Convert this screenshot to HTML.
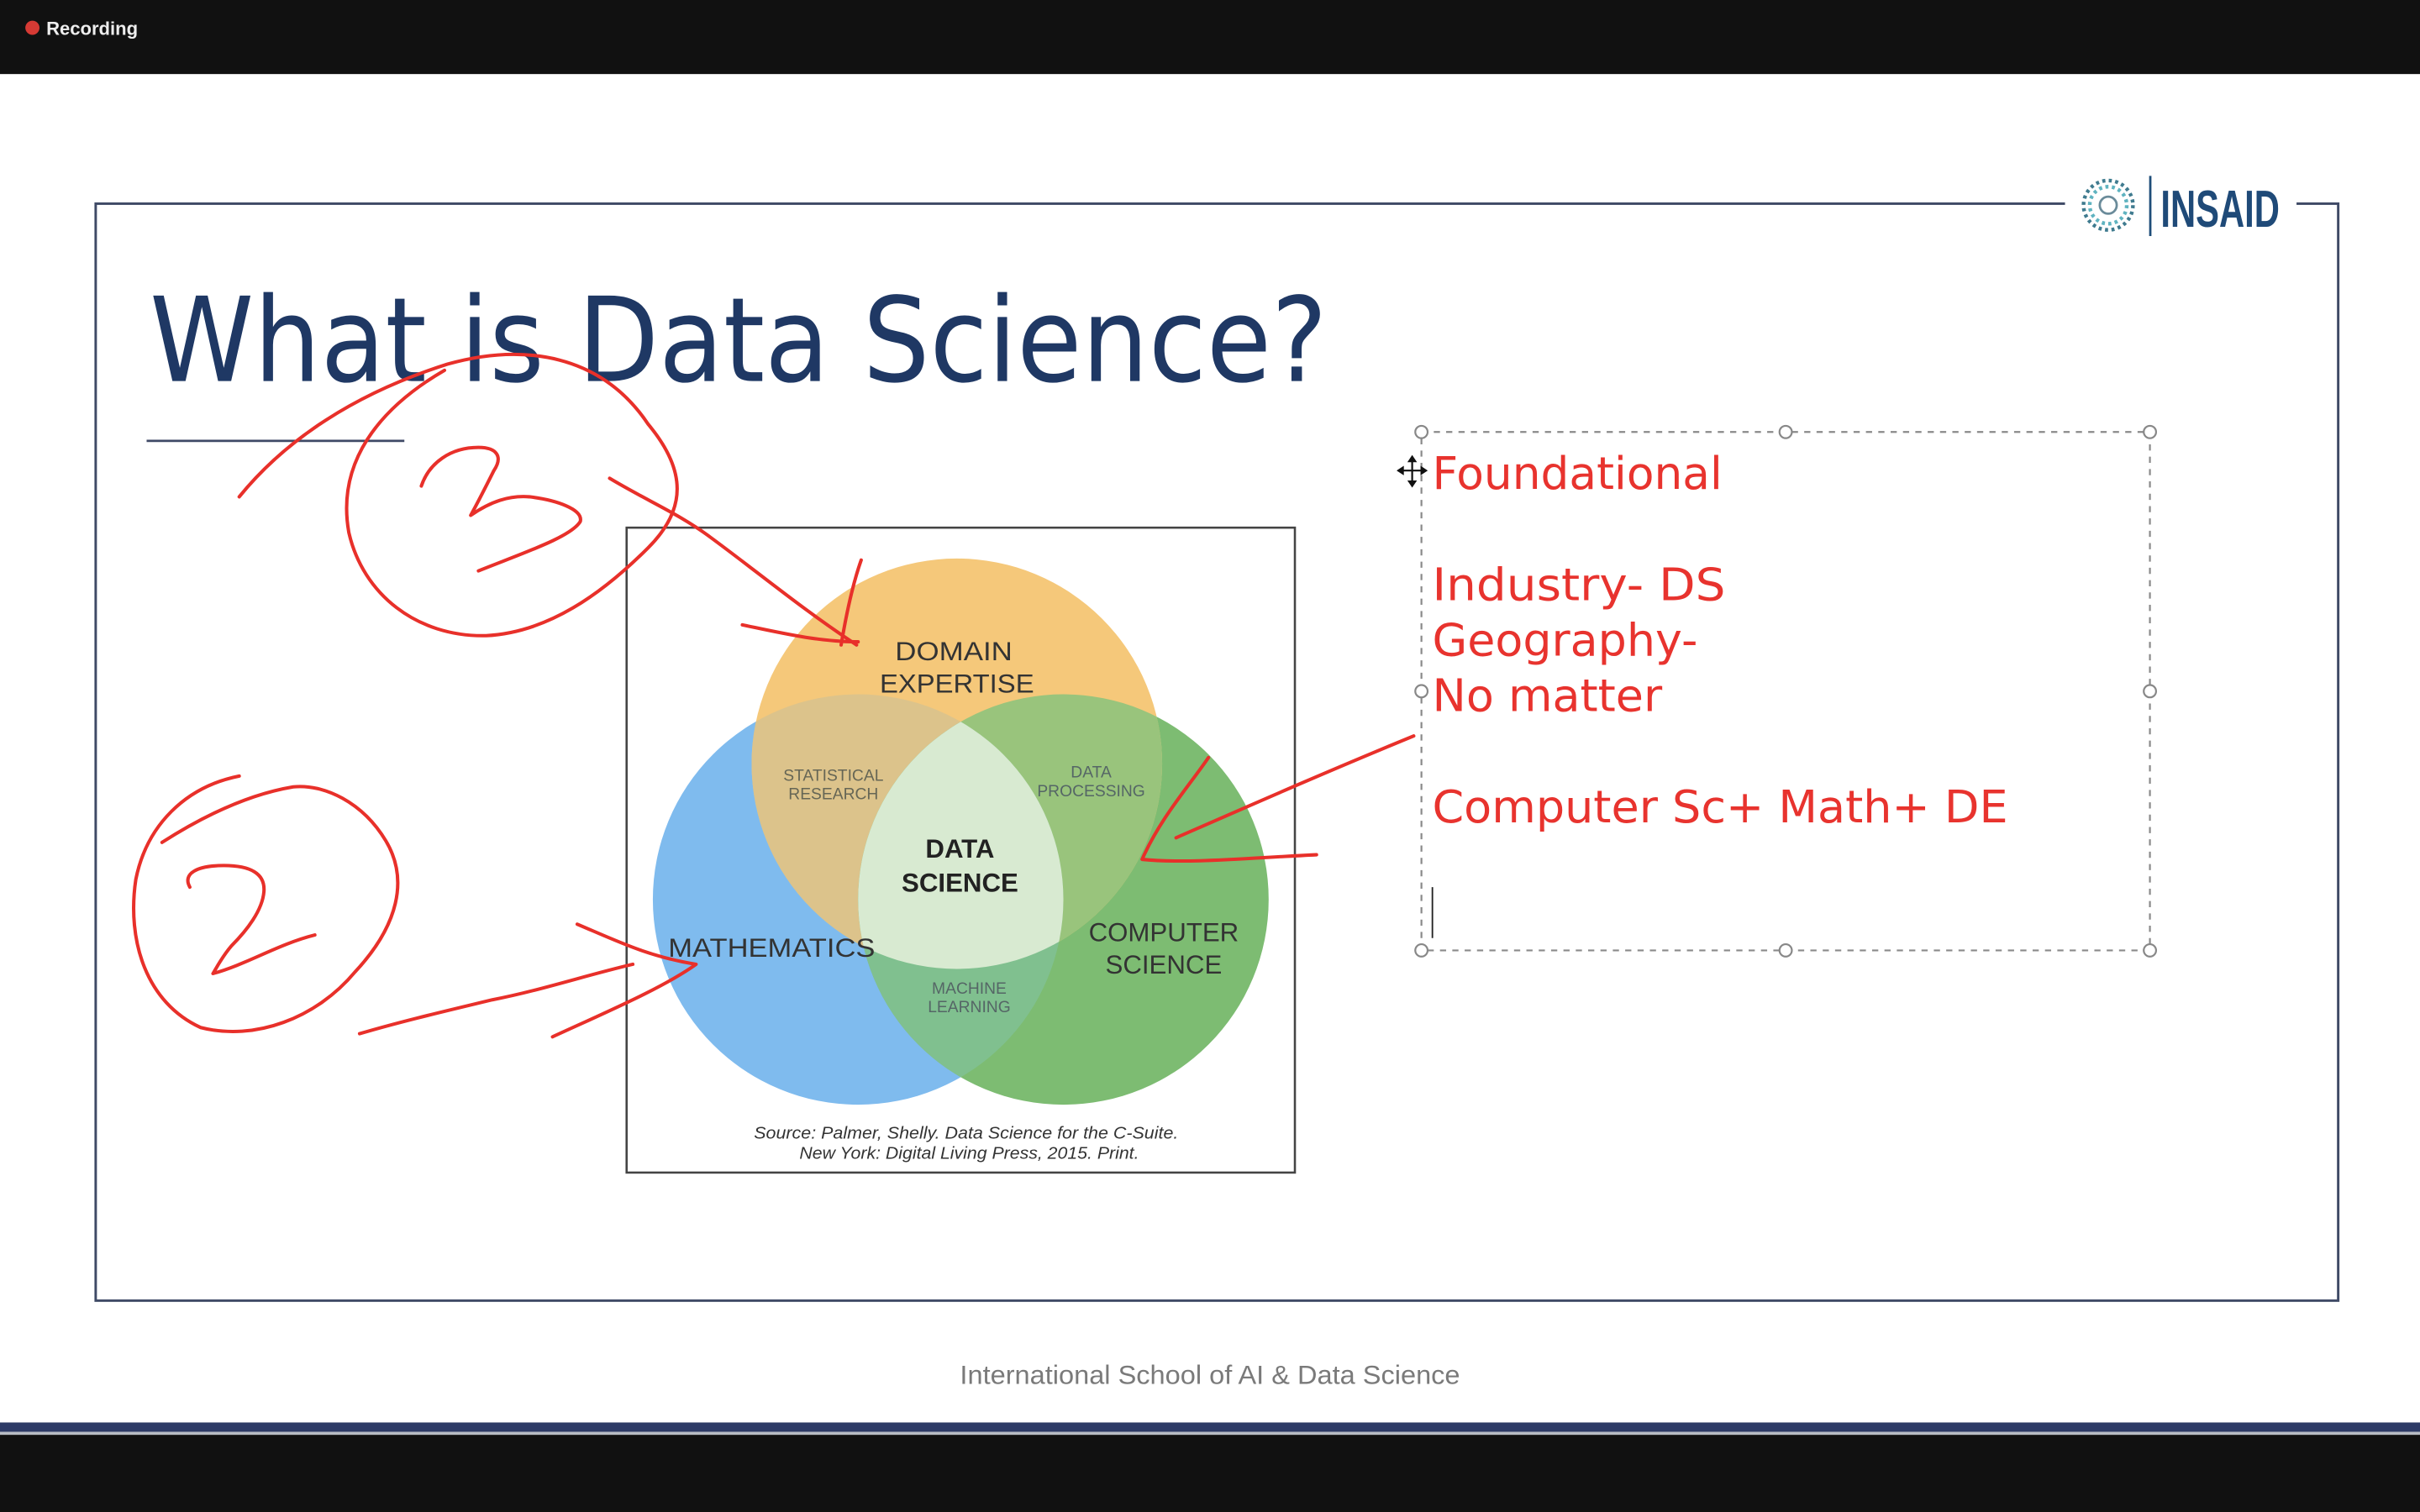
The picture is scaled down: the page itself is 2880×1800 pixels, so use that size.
<!DOCTYPE html>
<html><head><meta charset="utf-8"><style>
html,body{margin:0;padding:0;background:#111;overflow:hidden}
svg{display:block}
</style></head><body>
<svg width="2880" height="1800" viewBox="0 0 1568 980" preserveAspectRatio="none" xmlns="http://www.w3.org/2000/svg">
<defs>
<clipPath id="cM"><circle cx="556" cy="583" r="133"/></clipPath>
<clipPath id="cC"><circle cx="689" cy="583" r="133"/></clipPath>
</defs>
<rect x="0" y="0" width="1568" height="980" fill="#111"/>
<rect x="0" y="48" width="1568" height="874" fill="#fff"/>
<rect x="0" y="922" width="1568" height="6" fill="#2d3a66"/>
<rect x="0" y="928" width="1568" height="2" fill="#b8bcc4"/>
<circle cx="21" cy="18" r="4.6" fill="#d63a34"/>
<text x="30" y="22.5" font-family="Liberation Sans, sans-serif" font-weight="bold" font-size="12" fill="#eee">Recording</text>

<rect x="62" y="132" width="1453" height="711" fill="none" stroke="#3f4a66" stroke-width="1.6"/>
<rect x="1338" y="110" width="150" height="46" fill="#fff"/>
<g fill="none" stroke-width="2.4" stroke-dasharray="2 2.2">
<circle cx="1366" cy="133" r="16" stroke="#3f7b8f"/>
<circle cx="1366" cy="133" r="12" stroke="#5fb3c0"/>
</g>
<circle cx="1366" cy="133" r="5.5" fill="none" stroke="#6a8b9a" stroke-width="1.5"/>
<rect x="1392.5" y="114" width="1.5" height="39" fill="#1f4e79"/>
<text x="1400" y="147" font-family="Liberation Sans, sans-serif" font-weight="bold" font-size="34" fill="#1f4a78" textLength="77" lengthAdjust="spacingAndGlyphs">INSAID</text>

<text x="97" y="247" font-family="DejaVu Sans, Liberation Sans, sans-serif" font-size="76" fill="#1f3864" textLength="763" lengthAdjust="spacingAndGlyphs">What is Data Science?</text>
<rect x="95" y="285" width="167" height="1.5" fill="#3f4a66"/>

<rect x="406" y="342" width="433" height="418" fill="#fff" stroke="#444" stroke-width="1.4"/>
<circle cx="556" cy="583" r="133" fill="#7fbbee"/>
<circle cx="689" cy="583" r="133" fill="#7dbc72"/>
<circle cx="620" cy="495" r="133" fill="#f5c87a"/>
<circle cx="620" cy="495" r="133" fill="#dcc38b" clip-path="url(#cM)"/>
<circle cx="620" cy="495" r="133" fill="#99c47c" clip-path="url(#cC)"/>
<circle cx="556" cy="583" r="133" fill="#80c08f" clip-path="url(#cC)"/>
<g clip-path="url(#cM)"><circle cx="620" cy="495" r="133" fill="#d8ead1" clip-path="url(#cC)"/></g>
<g font-family="Liberation Sans, sans-serif" text-anchor="middle" fill="#333">
<text x="618" y="428" font-size="17" textLength="76" lengthAdjust="spacingAndGlyphs">DOMAIN</text>
<text x="620" y="449" font-size="17" textLength="100" lengthAdjust="spacingAndGlyphs">EXPERTISE</text>
<text x="540" y="506" font-size="10.5" fill="#665">STATISTICAL</text>
<text x="540" y="518" font-size="10.5" fill="#665">RESEARCH</text>
<text x="707" y="504" font-size="10.5" fill="#566">DATA</text>
<text x="707" y="516" font-size="10.5" fill="#566">PROCESSING</text>
<text x="622" y="556" font-size="17" font-weight="bold" fill="#222">DATA</text>
<text x="622" y="578" font-size="17" font-weight="bold" fill="#222">SCIENCE</text>
<text x="500" y="620" font-size="17" textLength="134" lengthAdjust="spacingAndGlyphs">MATHEMATICS</text>
<text x="754" y="610" font-size="17">COMPUTER</text>
<text x="754" y="631" font-size="17">SCIENCE</text>
<text x="628" y="644" font-size="10.5" fill="#566">MACHINE</text>
<text x="628" y="656" font-size="10.5" fill="#566">LEARNING</text>
<text x="626" y="738" font-size="11" font-style="italic" textLength="275" lengthAdjust="spacingAndGlyphs">Source: Palmer, Shelly. Data Science for the C-Suite.</text>
<text x="628" y="751" font-size="11" font-style="italic" textLength="220" lengthAdjust="spacingAndGlyphs">New York: Digital Living Press, 2015. Print.</text>
</g>

<g fill="none" stroke="#8a8a8a" stroke-width="1.2">
<rect x="921" y="280" width="472" height="336" stroke-dasharray="4 4"/>
</g>
<g fill="#fff" stroke="#888" stroke-width="1.2">
<circle cx="921" cy="280" r="4"/><circle cx="1157" cy="280" r="4"/><circle cx="1393" cy="280" r="4"/>
<circle cx="921" cy="448" r="4"/><circle cx="1393" cy="448" r="4"/>
<circle cx="921" cy="616" r="4"/><circle cx="1157" cy="616" r="4"/><circle cx="1393" cy="616" r="4"/>
</g>
<g font-family="DejaVu Sans, Liberation Sans, sans-serif" font-size="29" fill="#e8332e">
<text x="928" y="317" textLength="188" lengthAdjust="spacingAndGlyphs">Foundational</text>
<text x="928" y="389" textLength="190" lengthAdjust="spacingAndGlyphs">Industry- DS</text>
<text x="928" y="425" textLength="172" lengthAdjust="spacingAndGlyphs">Geography-</text>
<text x="928" y="461" textLength="149" lengthAdjust="spacingAndGlyphs">No matter</text>
<text x="928" y="533" textLength="373" lengthAdjust="spacingAndGlyphs">Computer Sc+ Math+ DE</text>
</g>
<rect x="927.6" y="575" width="1" height="33" fill="#222"/>
<g stroke="#111" stroke-width="1.2" fill="#111">
<line x1="915" y1="297" x2="915" y2="314"/><line x1="906.5" y1="305" x2="923.5" y2="305"/>
<path d="M915 296l-2 3h4z M915 315l-2-3h4z M906 305l3-2v4z M924 305l-3-2v4z"/>
</g>

<g fill="none" stroke="#e8302a" stroke-width="2.2" stroke-linecap="round" stroke-linejoin="round">
<path d="M155 322 C185 285 230 255 290 236 C340 222 390 230 420 275 C445 305 445 330 420 355 C390 385 355 410 315 412 C270 413 235 385 226 345 C218 300 245 265 288 240"/>
<path d="M273 315 C278 300 292 290 310 290 C322 290 326 296 320 305 C315 315 310 325 305 334 C318 325 330 321 343 322 C360 324 378 330 376 338 C370 348 340 358 310 370"/>
<path d="M395 310 C420 325 440 333 460 348 C490 370 520 395 555 418"/>
<path d="M481 405 C505 410 530 416 556 416"/>
<path d="M558 363 C552 380 548 400 545 418"/>
<path d="M155 503 C120 510 95 535 88 570 C82 610 95 650 130 666 C165 675 205 660 230 630 C258 600 265 570 250 545 C235 520 210 508 190 510 C160 515 130 530 105 546"/>
<path d="M123 575 C118 566 128 561 145 561 C162 561 172 566 171 578 C170 590 160 603 150 613 C144 620 141 626 138 631 C160 625 180 612 204 606"/>
<path d="M233 670 C260 662 290 655 319 648 C350 642 380 632 410 625"/>
<path d="M374 599 C400 610 420 620 451 625 C430 640 395 655 358 672"/>
<path d="M916 477 C860 500 810 522 762 543"/>
<path d="M783 491 C770 510 752 530 740 557 C770 560 810 556 853 554"/>
</g>

<text x="784" y="897" text-anchor="middle" font-family="Liberation Sans, sans-serif" font-size="17" fill="#7a7a7a" textLength="324" lengthAdjust="spacingAndGlyphs">International School of AI &amp; Data Science</text>
</svg>
</body></html>
